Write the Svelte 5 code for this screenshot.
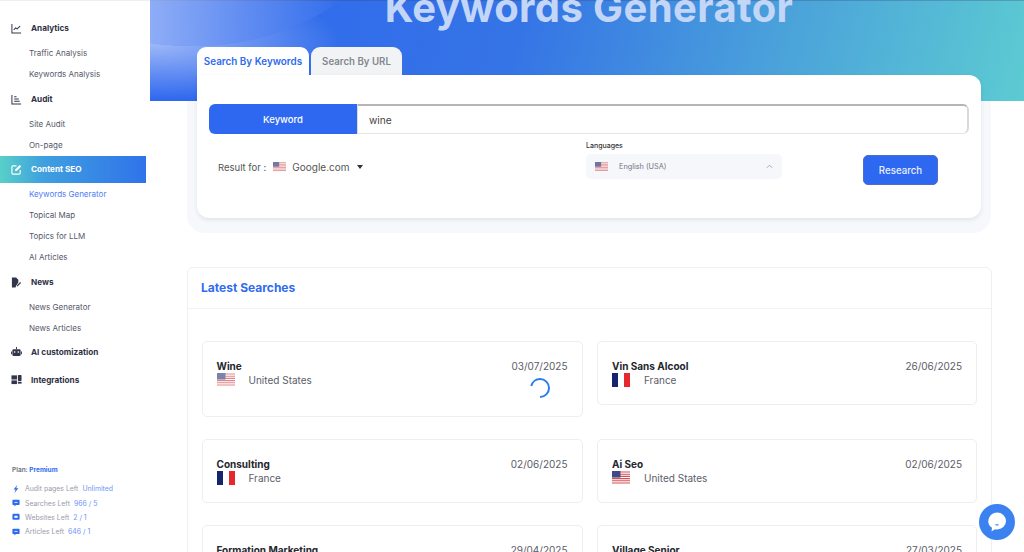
<script>
  const searches = [
    { name: 'Wine', country: 'United States', flag: 'us', date: '03/07/2025', loading: true },
    { name: 'Vin Sans Alcool', country: 'France', flag: 'fr', date: '26/06/2025' },
    { name: 'Consulting', country: 'France', flag: 'fr', date: '02/06/2025' },
    { name: 'Ai Seo', country: 'United States', flag: 'us', date: '02/06/2025' },
    { name: 'Formation Marketing', country: 'France', flag: 'fr', date: '29/04/2025' },
    { name: 'Village Senior', country: 'France', flag: 'fr', date: '27/03/2025' }
  ];

  const stats = [
    { label: 'Audit pages Left', value: 'Unlimited', icon: 'bolt' },
    { label: 'Searches Left', value: '966 / 5', icon: 'chat' },
    { label: 'Websites Left', value: '2 / 1', icon: 'site' },
    { label: 'Articles Left', value: '646 / 1', icon: 'chat' }
  ];
</script>

{#snippet usFlag()}
  <svg class="flag" viewBox="0 0 18 14" preserveAspectRatio="none">
    <rect width="18" height="14" fill="#fff" />
    <path d="M0 1h18M0 3.2h18M0 5.4h18M0 7.6h18M0 9.8h18M0 12h18" stroke="#d2484f" stroke-width="1.1" />
    <rect width="8.5" height="6.6" fill="#3c3f7c" />
  </svg>
{/snippet}

{#snippet frFlag()}
  <svg class="flag fr" viewBox="0 0 18 14" preserveAspectRatio="none">
    <rect width="6" height="14" fill="#14246f" />
    <rect x="6" width="6" height="14" fill="#fff" />
    <rect x="12" width="6" height="14" fill="#e5282e" />
  </svg>
{/snippet}

<div class="page">
  <aside class="sidebar">
    <nav>
      <div class="group">
        <svg class="ico" viewBox="0 0 12 12"><path d="M1 1v10h10M3 7.5l2-2.2 1.6 1.2L10 3.5" fill="none" stroke="#33364a" stroke-width="1.1" /></svg>
        <span>Analytics</span>
      </div>
      <a href="#a">Traffic Analysis</a>
      <a href="#a">Keywords Analysis</a>

      <div class="group">
        <svg class="ico" viewBox="0 0 12 12"><path d="M1 1v10h10M3.5 3h2.500M3.5 5.500h5M3.5 8h6" fill="none" stroke="#33364a" stroke-width="1.1" /></svg>
        <span>Audit</span>
      </div>
      <a href="#a">Site Audit</a>
      <a href="#a">On-page</a>

      <div class="group active">
        <svg class="ico" viewBox="0 0 12 12"><path d="M6 2H2a1 1 0 0 0-1 1v7a1 1 0 0 0 1 1h7a1 1 0 0 0 1-1V6.500" fill="none" stroke="#fff" stroke-width="1.2" /><path d="M4.500 7.700V6L9.500 1l1.700 1.700-5 5z" fill="#fff" /></svg>
        <span>Content SEO</span>
      </div>
      <a href="#a" class="current">Keywords Generator</a>
      <a href="#a">Topical Map</a>
      <a href="#a">Topics for LLM</a>
      <a href="#a">AI Articles</a>

      <div class="group">
        <svg class="ico" viewBox="0 0 12 12"><path d="M1 0.500h4.500L8 3v3L5.500 9.500 5 11.500H1z" fill="#33364a" /><path d="M6.500 10l4-4" stroke="#33364a" stroke-width="1.3" /></svg>
        <span>News</span>
      </div>
      <a href="#a">News Generator</a>
      <a href="#a">News Articles</a>

      <div class="group solo">
        <svg class="ico" viewBox="0 0 12 12"><rect x="1.500" y="3.500" width="9" height="7.500" rx="1.500" fill="#33364a" /><rect x="0" y="6" width="1" height="3" fill="#33364a" /><rect x="11" y="6" width="1" height="3" fill="#33364a" /><path d="M6 1v2.500" stroke="#33364a" /><circle cx="4" cy="6.500" r=".9" fill="#fff" /><circle cx="8" cy="6.500" r=".9" fill="#fff" /></svg>
        <span>AI customization</span>
      </div>
      <div class="group solo">
        <svg class="ico" viewBox="0 0 12 12"><rect x=".5" y="1.500" width="6" height="4.500" fill="#33364a" /><rect x=".5" y="7" width="6" height="4" fill="#33364a" /><rect x="7.500" y="1" width="4" height="6.500" rx=".8" fill="#33364a" /><rect x="7.500" y="8.500" width="4" height="2" fill="#33364a" /></svg>
        <span>Integrations</span>
      </div>
    </nav>

    <div class="plan">
      <p class="plan-name">Plan: <b>Premium</b></p>
      {#each stats as s}
        <p class="stat">
          {#if s.icon === 'bolt'}
            <svg viewBox="0 0 10 10"><path d="M6.500 0 2 5.500h2.500L3 10l5-6H5.300z" fill="#2f6bf0" /></svg>
          {:else if s.icon === 'site'}
            <svg viewBox="0 0 10 10"><rect x=".5" y="1" width="9" height="7.500" rx="1.500" fill="#2f6bf0" /><rect x="3" y="3.500" width="4" height="2.500" fill="#fff" /></svg>
          {:else}
            <svg viewBox="0 0 10 10"><path d="M1.500 1h7a1 1 0 0 1 1 1v4.500a1 1 0 0 1-1 1H5L3 9.500V7.500H1.500a1 1 0 0 1-1-1V2a1 1 0 0 1 1-1z" fill="#2f6bf0" /><path d="M3 4.300h4" stroke="#fff" /></svg>
          {/if}
          <span class="stat-label">{s.label}</span>
          <span class="stat-value">{s.value}</span>
        </p>
      {/each}
    </div>
  </aside>

  <main>
    <header class="hero">
      <svg class="waves" viewBox="0 0 240 101" aria-hidden="true">
        <defs>
          <radialGradient id="low" gradientUnits="userSpaceOnUse" cx="0" cy="0" r="1" gradientTransform="translate(0 42) scale(190 58)">
            <stop offset="0" stop-color="#fff" stop-opacity=".55" />
            <stop offset="1" stop-color="#fff" stop-opacity="0" />
          </radialGradient>
          <linearGradient id="top" gradientUnits="userSpaceOnUse" x1="0" y1="12" x2="192" y2="12">
            <stop offset="0" stop-color="#fff" stop-opacity=".46" />
            <stop offset="1" stop-color="#fff" stop-opacity="0" />
          </linearGradient>
        </defs>
        <path d="M0 43C20 46 40 46 50 46C95 46 150 30 192 0H240V101H0Z" fill="url(#low)" />
        <path d="M0 0H192C150 30 95 46 50 46C40 46 20 46 0 43Z" fill="url(#top)" />
      </svg>
      <h1>Keywords Generator</h1>
    </header>

    <div class="search-wrap">
      <div class="tabs">
        <button class="tab on">Search By Keywords</button>
        <button class="tab">Search By URL</button>
      </div>
      <section class="search-card">
        <div class="keyword-row">
          <div class="keyword-label">Keyword</div>
          <input class="keyword-input" value="wine" />
        </div>
        <div class="options">
          <div class="result-for">
            <span>Result for :</span>
            {@render usFlag()}
            <span class="engine">Google.com</span>
            <i class="caret"></i>
          </div>
          <div class="languages">
            <span class="lang-label">Languages</span>
            <div class="lang-select">
              {@render usFlag()}
              <span>English (USA)</span>
              <svg class="chev" viewBox="0 0 8 5"><path d="M1 4l3-3 3 3" fill="none" stroke="#9a9ea8" stroke-width="1" /></svg>
            </div>
          </div>
          <button class="research">Research</button>
        </div>
      </section>
    </div>

    <section class="latest">
      <h2>Latest Searches</h2>
      <div class="grid">
        {#each searches as s}
          <article class="item" class:tall={s.loading}>
            <div class="item-top">
              <strong>{s.name}</strong>
              <span class="date">{s.date}</span>
            </div>
            <div class="item-sub">
              <div class="country">
                {#if s.flag === 'us'}{@render usFlag()}{:else}{@render frFlag()}{/if}
                <span>{s.country}</span>
              </div>
              {#if s.loading}
                <svg class="spinner" viewBox="0 0 20 20"><path d="M1.300 8A9 9 0 0 1 10 1a9 9 0 0 1 0 18" fill="none" stroke="#2f7bf2" stroke-width="2" /></svg>
              {/if}
            </div>
          </article>
        {/each}
      </div>
    </section>
  </main>

  <button class="chat" aria-label="Chat">
    <svg viewBox="0 0 20 20"><path d="M10 .5a9 8.500 0 0 1 0 17c-.7 0-1.300 0-2-.2L4.500 19.500l.5-3.700A9 8.500 0 0 1 10 .5z" fill="#fff" /><path d="M8.500 12.500q1.500 1 3 0" fill="none" stroke="#3b82f0" stroke-width="1.100" /></svg>
  </button>
</div>

<style>
  :global(body) {
    margin: 0;
    background: #fff;
  }

  .page {
    display: flex;
    height: 552px;
    overflow: hidden;
    position: relative;
    font-family: Inter, "Liberation Sans", sans-serif;
    color: #33364a;
  }

  .sidebar {
    width: 150px;
    flex: none;
    display: flex;
    flex-direction: column;
    box-sizing: border-box;
    padding-top: 13.5px;
    padding-bottom: 13px;
    box-shadow: inset 0 1px #eeeff2;
  }

  nav {
    width: 146px;
    display: flex;
    flex-direction: column;
  }

  .group {
    display: flex;
    align-items: center;
    gap: 9px;
    height: 29px;
    padding-left: 11px;
    font-size: 8.200px;
    font-weight: 700;
    color: #2f3245;
  }

  a + .group.solo {
    margin-top: -1px;
  }

  .group.solo {
    height: 28px;
  }

  .group.active {
    height: 27px;
    margin: 0 0 1px;
    color: #fff;
    background: linear-gradient(90deg, #58d0c8 0%, #3f9fe0 30%, #2f73ea 100%);
  }

  .ico {
    width: 11px;
    height: 11px;
    flex: none;
  }

  nav a {
    display: block;
    height: 21px;
    line-height: 21px;
    padding-left: 29px;
    font-size: 8px;
    font-weight: 400;
    color: #55586a;
    text-decoration: none;
  }

  nav a.current {
    color: #4f7df5;
  }

  .plan {
    margin-top: auto;
    padding-left: 12px;
  }

  .plan p {
    margin: 0;
  }

  .plan-name {
    font-size: 6.500px;
    font-weight: 600;
    color: #6a6d7c;
    margin-bottom: 7px !important;
  }

  .plan-name b {
    color: #2f6bf0;
    font-weight: 700;
  }

  .stat {
    display: flex;
    align-items: center;
    height: 14.400px;
    font-size: 6.900px;
  }

  .stat svg {
    width: 8px;
    height: 8px;
    margin-right: 5px;
  }

  .stat-label {
    color: #9a9dab;
    margin-right: 4px;
  }

  .stat-value {
    color: #6f96f5;
  }

  main {
    flex: 1;
    min-width: 0;
    display: flex;
    flex-direction: column;
  }

  .hero {
    position: relative;
    z-index: 1;
    height: 101px;
    flex: none;
    background: linear-gradient(105deg, #2f67f0 0%, #3574e6 42%, #4ba3da 72%, #5ccbd2 100%);
    box-shadow: inset 0 1px rgba(60, 70, 110, .3);
    overflow: hidden;
    text-align: center;
  }

  .waves {
    position: absolute;
    left: 0;
    top: 0;
    width: 240px;
    height: 101px;
  }

  h1 {
    position: relative;
    margin: -15px 0 0;
    padding-left: 4px;
    font-size: 40px;
    line-height: 46px;
    font-weight: 700;
    color: #c3d6f8;
    letter-spacing: .4px;
  }

  .search-wrap {
    margin: -54px 33px 0 37px;
    position: relative;
  }

  /* pale ring round the card, it only shows below the hero */
  .search-wrap::before {
    content: '';
    position: absolute;
    inset: 28px 0 -15px;
    border-radius: 18px;
    background: #f7f8fb;
  }

  .tabs,
  .search-card {
    position: relative;
    z-index: 2;
  }

  .tabs {
    display: flex;
    padding-left: 10px;
    height: 28px;
  }

  .tab {
    border: 0;
    background: #f2f3f5;
    color: #85878f;
    font: 600 9.700px Inter, sans-serif;
    width: 91px;
    border-radius: 9px 9px 0 0;
    padding: 0;
  }

  .tab.on {
    width: 113px;
    background: #fff;
    color: #2f6bf0;
    border-right: 1px solid #2f6bf0;
    margin-right: 1px;
    font-size: 9.900px;
  }

  .search-card {
    margin-left: 10px;
    margin-right: 10px;
    height: 143px;
    box-sizing: border-box;
    padding: 29px 12px 0;
    background: #fff;
    border-radius: 0 12px 12px 12px;
    box-shadow: 0 2px 4px rgba(40, 50, 90, .1);
  }

  .keyword-row {
    display: flex;
    height: 30px;
  }

  .keyword-label {
    width: 148px;
    flex: none;
    background: #2f68f0;
    color: #fff;
    border-radius: 6px 0 0 6px;
    font-size: 9.500px;
    font-weight: 500;
    display: flex;
    align-items: center;
    justify-content: center;
  }

  .keyword-input {
    flex: 1;
    min-width: 0;
    box-sizing: border-box;
    border: 1px solid #e4e5e9;
    border-top: 2px solid #b5b5b5;
    border-right: 2px solid #d8d9dc;
    border-left: 1px solid #ddd;
    border-radius: 0 6px 6px 0;
    padding: 0 11px;
    font: 400 10.200px Inter, sans-serif;
    color: #444;
    outline: none;
  }

  .options {
    display: flex;
    align-items: flex-start;
    height: 70px;
    padding-top: 6px;
  }

  .result-for {
    width: 377px;
    margin-top: 18px;
    box-sizing: border-box;
    padding-left: 9px;
    display: flex;
    align-items: center;
    gap: 7px;
    font-size: 9.500px;
    color: #555;
    height: 18px;
  }

  .engine {
    font-size: 10px;
    margin-left: -1px;
  }

  .flag {
    width: 13px;
    height: 10px;
    flex: none;
    opacity: .7;
  }

  .caret {
    width: 0;
    height: 0;
    border: 3px solid transparent;
    border-top: 4px solid #333;
    border-bottom: 0;
    margin-left: 1px;
  }

  .languages {
    width: 196px;
  }

  .lang-label {
    display: block;
    font-size: 7px;
    font-weight: 500;
    line-height: 11px;
    margin-bottom: 3px;
    color: #333;
  }

  .lang-select {
    height: 25px;
    background: #f6f7fb;
    border-radius: 5px;
    display: flex;
    align-items: center;
    padding: 0 9px;
    font-size: 7.300px;
    color: #70737f;
    gap: 11px;
    box-sizing: border-box;
  }

  .chev {
    width: 7px;
    height: 5px;
    margin-left: auto;
  }

  .research {
    margin-left: 81px;
    margin-top: 15px;
    width: 75px;
    height: 30px;
    background: #2f68f0;
    border: 1px solid #4a6fc8;
    border-radius: 5px;
    color: #e8efff;
    font: 500 9.700px Inter, sans-serif;
  }

  .latest {
    margin: 49px 32px 0 37px;
    border: 1px solid #eef0f4;
    border-radius: 6px 6px 0 0;
    flex: 1;
  }

  h2 {
    margin: 0;
    height: 40px;
    line-height: 40px;
    padding-left: 13px;
    font-size: 12px;
    font-weight: 700;
    color: #2f6bf0;
    border-bottom: 1px solid #f2f3f7;
  }

  .grid {
    display: grid;
    grid-template-columns: 381px 380px;
    column-gap: 14.500px;
    row-gap: 22px;
    padding: 32px 13px 0 13.500px;
    align-items: start;
  }

  .item {
    box-sizing: border-box;
    height: 64px;
    border: 1px solid #eceef3;
    border-radius: 5px;
    padding: 18px 14px 0;
  }

  .item.tall {
    height: 76px;
  }

  .item-top,
  .item-sub {
    display: flex;
    justify-content: space-between;
  }

  .item-top {
    font-size: 10px;
    line-height: 12px;
  }

  .item-top strong {
    font-weight: 700;
    color: #25262e;
  }

  .date {
    color: #5b5d68;
  }

  .item-sub {
    margin-top: 1px;
  }

  .country {
    display: flex;
    align-items: center;
    gap: 14px;
    font-size: 10px;
    color: #5b5d68;
    height: 14px;
  }

  .country .flag {
    width: 18px;
    height: 14px;
    opacity: .95;
  }

  .country .flag.fr {
    opacity: 1;
  }

  .item.tall .flag {
    opacity: .65;
  }

  .spinner {
    width: 20px;
    height: 20px;
    margin-right: 18px;
    margin-top: 5px;
  }

  .chat {
    position: absolute;
    right: 9px;
    bottom: 12px;
    z-index: 3;
    width: 36px;
    height: 36px;
    border: 0;
    padding: 8px;
    border-radius: 50%;
    background: #3b82f0;
  }

  .chat svg {
    display: block;
  }
</style>
